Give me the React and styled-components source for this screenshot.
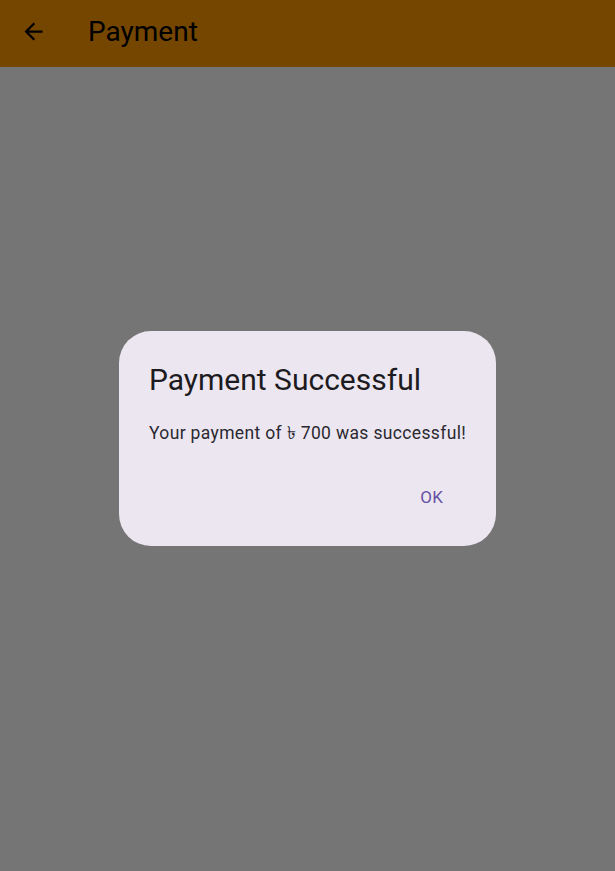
import React from 'react';
import styled, { createGlobalStyle } from 'styled-components';

const GlobalStyle = createGlobalStyle`
  html, body {
    margin: 0;
    padding: 0;
    height: 100%;
  }
  body {
    font-family: Roboto, "Noto Sans", sans-serif;
  }
  #root {
    height: 100%;
  }
`;

const Page = styled.div`
  position: relative;
  height: 871px;
  width: 615px;
  background: #ffffff;
  overflow: hidden;
`;

const AppBar = styled.header`
  height: 67px;
  background: #ff9800;
  display: flex;
  align-items: center;
  padding-left: 20px;
  padding-bottom: 4px;
  box-sizing: border-box;
  gap: 41px;
`;

const BackButton = styled.button`
  width: 27px;
  height: 27px;
  padding: 0;
  border: none;
  background: transparent;
  display: flex;
  align-items: center;
  justify-content: center;
  color: #000;
`;

const Title = styled.h1`
  margin: 0;
  font-size: 28px;
  font-weight: 400;
  color: #000;
`;

const Scrim = styled.div`
  position: absolute;
  inset: 0;
  background: rgba(0, 0, 0, 0.54);
  display: flex;
  flex-direction: column;
  align-items: center;
  padding-top: 331px;
  box-sizing: border-box;
`;

const Dialog = styled.div`
  width: 377px;
  box-sizing: border-box;
  background: #ece6f0;
  border-radius: 32px;
  padding: 31px 30px 29px;
  display: flex;
  flex-direction: column;
`;

const DialogTitle = styled.h2`
  margin: 0 0 23px;
  font-size: 30px;
  line-height: 36px;
  font-weight: 400;
  color: #1d1b20;
`;

const DialogBody = styled.p`
  margin: 0;
  font-size: 17.5px;
  line-height: 24px;
  letter-spacing: 0.35px;
  color: #2b2930;
  white-space: nowrap;
`;

const Actions = styled.div`
  display: flex;
  justify-content: flex-end;
  margin-top: 32px;
`;

const TextButton = styled.button`
  border: none;
  background: transparent;
  font-family: inherit;
  font-size: 17px;
  line-height: 20px;
  letter-spacing: 0.2px;
  color: #6750a4;
  padding: 10px 23px;
`;

const App = () => (
  <Page>
    <GlobalStyle />
    <AppBar>
      <BackButton aria-label="Back">
        <svg width="27" height="27" viewBox="0 0 24 24" fill="currentColor">
          <path d="M20 11H7.83l5.59-5.59L12 4l-8 8 8 8 1.41-1.41L7.83 13H20v-2z" />
        </svg>
      </BackButton>
      <Title>Payment</Title>
    </AppBar>
    <Scrim>
      <Dialog>
        <DialogTitle>Payment Successful</DialogTitle>
        <DialogBody>Your payment of ৳ 700 was successful!</DialogBody>
        <Actions>
          <TextButton>OK</TextButton>
        </Actions>
      </Dialog>
    </Scrim>
  </Page>
);

export default App;
